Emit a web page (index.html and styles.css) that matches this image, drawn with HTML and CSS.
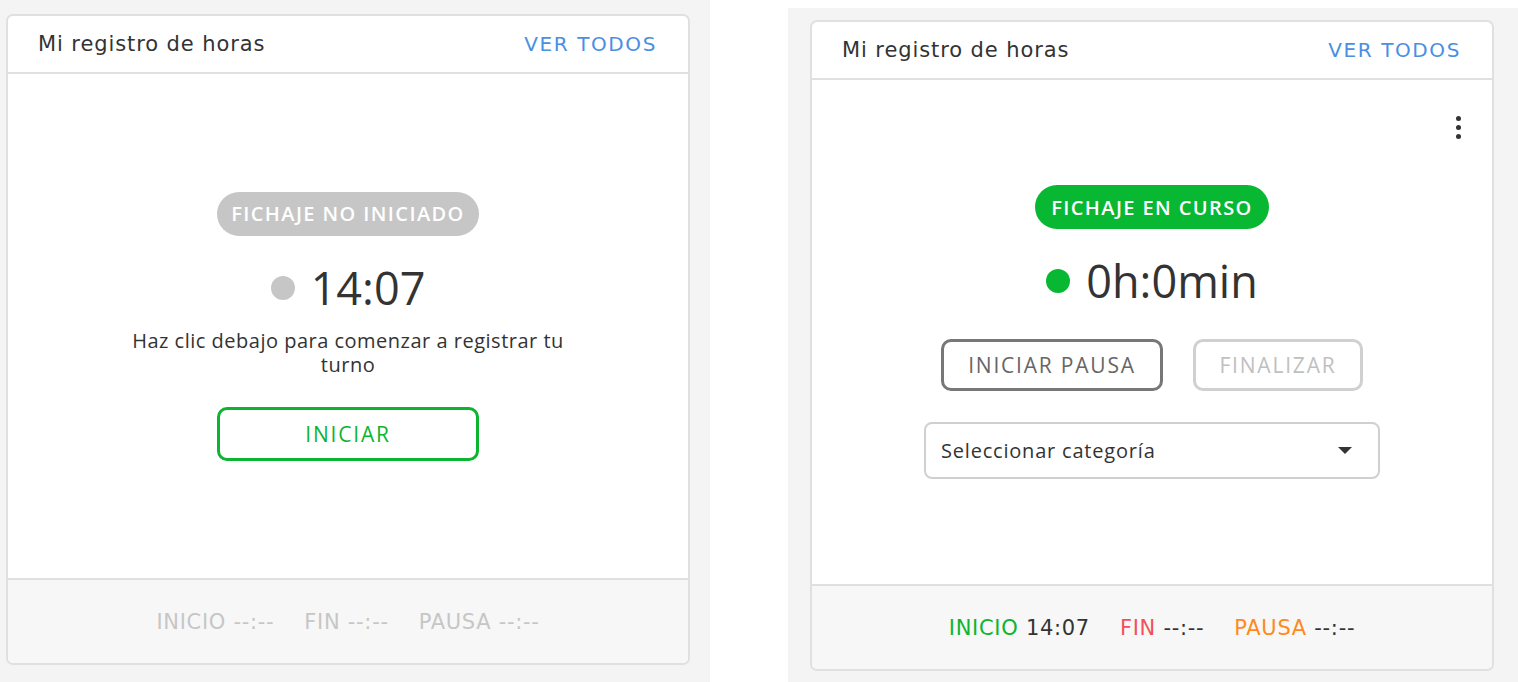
FILE: index.html
```html
<!DOCTYPE html>
<html lang="es">
<head>
    <meta charset="UTF-8">
    <title>Mi registro de horas</title>
    <link rel="stylesheet" href="styles.css">
</head>
<body>
<div class="panel panel-left">
    <div class="card">
        <div class="card-head">
            <span class="card-title">Mi registro de horas</span>
            <a class="see-all" href="#">VER TODOS</a>
        </div>
        <div class="card-body">
            <div class="badge badge-idle">FICHAJE NO INICIADO</div>
            <div class="clock"><span class="dot dot-idle"></span>14:07</div>
            <p class="hint">Haz clic debajo para comenzar a registrar tu turno</p>
            <button class="btn btn-start">INICIAR</button>
        </div>
        <div class="card-foot idle">
            <span>INICIO --:--</span>
            <span>FIN --:--</span>
            <span>PAUSA --:--</span>
        </div>
    </div>
</div>
<div class="panel panel-right">
    <div class="card">
        <div class="card-head">
            <span class="card-title">Mi registro de horas</span>
            <a class="see-all" href="#">VER TODOS</a>
        </div>
        <div class="card-body">
            <div class="more"><i></i><i></i><i></i></div>
            <div class="badge badge-on">FICHAJE EN CURSO</div>
            <div class="clock"><span class="dot dot-on"></span>0h:0min</div>
            <div class="actions">
                <button class="btn btn-pause">INICIAR PAUSA</button>
                <button class="btn btn-end" disabled>FINALIZAR</button>
            </div>
            <div class="select">
                <span>Seleccionar categoría</span>
                <span class="caret"></span>
            </div>
        </div>
        <div class="card-foot">
            <span><b class="green">INICIO</b> 14:07</span>
            <span><b class="red">FIN</b> --:--</span>
            <span><b class="orange">PAUSA</b> --:--</span>
        </div>
    </div>
</div>
</body>
</html>
```

FILE: styles.css
```css
body{
    margin: 0;
    display: flex;
    align-items: flex-start;
    background-color: white;
    font-family: "Open Sans", "Noto Sans", sans-serif;
    color: #333;
}
.panel{
    background-color: #f4f4f4;
    box-sizing: border-box;
}
.panel-left{
    width: 710px;
    height: 682px;
    padding: 14px 20px 0 6px;
}
.panel-right{
    width: 730px;
    height: 674px;
    margin-top: 8px;
    margin-left: 78px;
    padding: 12px 24px 0 22px;
}
.card{
    width: 684px;
    height: 651px;
    box-sizing: border-box;
    border: 2px solid #e0e0e0;
    border-radius: 7px;
    background-color: white;
    display: flex;
    flex-direction: column;
    overflow: hidden;
}
.card-head{
    height: 56px;
    flex-shrink: 0;
    border-bottom: 2px solid #e0e0e0;
    display: flex;
    align-items: center;
    justify-content: space-between;
    padding: 0 31px 0 30px;
    font-family: "DejaVu Sans", sans-serif;
}
.card-title{
    font-size: 21px;
    letter-spacing: 0.9px;
    color: #333;
}
.see-all{
    font-size: 20px;
    color: #4a8fe2;
    text-decoration: none;
    letter-spacing: 1.6px;
}
.card-body{
    flex: 1;
    position: relative;
    display: flex;
    flex-direction: column;
    align-items: center;
    justify-content: center;
}
.badge{
    height: 44px;
    border-radius: 22px;
    color: white;
    font-size: 20px;
    font-weight: 600;
    letter-spacing: 1.4px;
    display: flex;
    align-items: center;
    justify-content: center;
}
.badge-idle{
    width: 262px;
    background-color: #c6c6c6;
}
.badge-on{
    width: 234px;
    background-color: #08b832;
}
.clock{
    margin-top: 26px;
    font-size: 45px;
    line-height: 52px;
    display: flex;
    align-items: center;
    color: #333;
}
.dot{
    width: 24px;
    height: 24px;
    border-radius: 50%;
    margin-right: 16px;
}
.dot-idle{
    background-color: #c6c6c6;
}
.dot-on{
    background-color: #08b832;
}
.hint{
    width: 460px;
    margin: 15px 0 0 0;
    font-size: 20px;
    line-height: 24px;
    text-align: center;
    letter-spacing: 0.5px;
}
.btn{
    background-color: white;
    border-radius: 10px;
    border: 3px solid;
    font-family: "Open Sans", "Noto Sans", sans-serif;
    font-size: 21px;
    letter-spacing: 1.8px;
}
.btn-start{
    margin-top: 30px;
    width: 262px;
    height: 54px;
    border-color: #0cb52f;
    color: #0cb52f;
}
.actions{
    margin-top: 32px;
    display: flex;
    gap: 30px;
}
.btn-pause{
    width: 222px;
    height: 52px;
    border-color: #777;
    color: #666;
}
.btn-end{
    width: 170px;
    height: 52px;
    border-color: #d0d0d0;
    color: #c0c0c0;
}
.select{
    margin-top: 31px;
    width: 456px;
    height: 57px;
    box-sizing: border-box;
    border: 2px solid #d0d0d0;
    border-radius: 8px;
    display: flex;
    align-items: center;
    justify-content: space-between;
    padding: 0 26px 0 15px;
    font-size: 20px;
    letter-spacing: 0.8px;
}
.caret{
    width: 0;
    height: 0;
    border-left: 7px solid transparent;
    border-right: 7px solid transparent;
    border-top: 7px solid #333;
}
.more{
    position: absolute;
    top: 36px;
    right: 31px;
    display: flex;
    flex-direction: column;
    gap: 4px;
}
.more i{
    width: 5px;
    height: 5px;
    border-radius: 50%;
    background-color: #333;
}
.card-foot{
    height: 83px;
    flex-shrink: 0;
    border-top: 2px solid #e0e0e0;
    background-color: #f7f7f7;
    display: flex;
    align-items: center;
    justify-content: center;
    gap: 30px;
    font-family: "DejaVu Sans", sans-serif;
    font-size: 21px;
    letter-spacing: 0.7px;
    color: #333;
}
.card-foot.idle{
    color: #c6c6c6;
}
.card-foot b{
    font-weight: normal;
}
.green{
    color: #0cb52f;
}
.red{
    color: #f2505a;
}
.orange{
    color: #ff8a1c;
}
```
